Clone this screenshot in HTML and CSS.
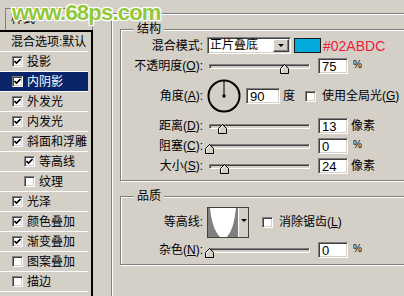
FILE: index.html
```html
<!DOCTYPE html>
<html lang="zh-CN">
<head>
<meta charset="utf-8">
<title>图层样式 - 内阴影</title>
<link rel="stylesheet" href="styles.css">
</head>
<body>
<div class="dialog">
  <aside class="side">
    <div class="side-head">样式</div>
    <ul class="list">
      <li class="item plain">混合选项:默认</li>
      <li class="item"><span class="cb"><svg viewBox="0 0 7 7" width="7" height="7"><path d="M0.5 3 L2.5 5 L6.5 1" fill="none" stroke="#000" stroke-width="1.6"/></svg></span><span class="txt">投影</span></li>
      <li class="item sel"><span class="cb"><svg viewBox="0 0 7 7" width="7" height="7"><path d="M0.5 3 L2.5 5 L6.5 1" fill="none" stroke="#000" stroke-width="1.6"/></svg></span><span class="txt">内阴影</span></li>
      <li class="item"><span class="cb"><svg viewBox="0 0 7 7" width="7" height="7"><path d="M0.5 3 L2.5 5 L6.5 1" fill="none" stroke="#000" stroke-width="1.6"/></svg></span><span class="txt">外发光</span></li>
      <li class="item"><span class="cb"><svg viewBox="0 0 7 7" width="7" height="7"><path d="M0.5 3 L2.5 5 L6.5 1" fill="none" stroke="#000" stroke-width="1.6"/></svg></span><span class="txt">内发光</span></li>
      <li class="item"><span class="cb"><svg viewBox="0 0 7 7" width="7" height="7"><path d="M0.5 3 L2.5 5 L6.5 1" fill="none" stroke="#000" stroke-width="1.6"/></svg></span><span class="txt">斜面和浮雕</span></li>
      <li class="item sub"><span class="cb"><svg viewBox="0 0 7 7" width="7" height="7"><path d="M0.5 3 L2.5 5 L6.5 1" fill="none" stroke="#000" stroke-width="1.6"/></svg></span><span class="txt">等高线</span></li>
      <li class="item sub"><span class="cb"></span><span class="txt">纹理</span></li>
      <li class="item"><span class="cb"><svg viewBox="0 0 7 7" width="7" height="7"><path d="M0.5 3 L2.5 5 L6.5 1" fill="none" stroke="#000" stroke-width="1.6"/></svg></span><span class="txt">光泽</span></li>
      <li class="item"><span class="cb"><svg viewBox="0 0 7 7" width="7" height="7"><path d="M0.5 3 L2.5 5 L6.5 1" fill="none" stroke="#000" stroke-width="1.6"/></svg></span><span class="txt">颜色叠加</span></li>
      <li class="item"><span class="cb"><svg viewBox="0 0 7 7" width="7" height="7"><path d="M0.5 3 L2.5 5 L6.5 1" fill="none" stroke="#000" stroke-width="1.6"/></svg></span><span class="txt">渐变叠加</span></li>
      <li class="item"><span class="cb"></span><span class="txt">图案叠加</span></li>
      <li class="item"><span class="cb"></span><span class="txt">描边</span></li>
    </ul>
  </aside>

  <main class="main">
    <div class="outer">
      <section class="group g-struct">
        <div class="legend">结构</div>

        <div class="row r1">
          <span class="lbl">混合模式:</span>
          <div class="ctrl">
            <div class="select"><span class="sel-text">正片叠底</span><span class="sel-btn"><i class="tri"></i></span></div>
            <span class="swatch"></span>
            <span class="hex">#02ABDC</span>
          </div>
        </div>

        <div class="row r2">
          <span class="lbl">不透明度(<u>O</u>):</span>
          <div class="ctrl">
            <div class="slider"><div class="track"></div><svg class="thumb" style="left:75%" viewBox="0 0 9 10" width="9" height="10"><polygon points="4.5,0.5 8.5,4.5 8.5,9.5 0.5,9.5 0.5,4.5" fill="#d4d0c8" stroke="#000"/><polyline points="1.5,8.5 1.5,5 4.5,2" fill="none" stroke="#fff"/></svg></div>
            <span class="num">75</span>
            <span class="pct">%</span>
          </div>
        </div>

        <div class="row r3">
          <span class="lbl">角度(<u>A</u>):</span>
          <div class="ctrl">
            <svg class="dial" viewBox="0 0 34 34" width="34" height="34"><circle cx="17" cy="17" r="15.5" fill="none" stroke="#000" stroke-width="2"/><line x1="17" y1="17" x2="17" y2="2" stroke="#000" stroke-width="1"/><rect x="15.5" y="15.5" width="3" height="3" fill="#000"/></svg>
            <span class="num wide">90</span>
            <span class="du">度</span>
            <span class="cb gap"></span>
            <span class="cb-text">使用全局光(<u>G</u>)</span>
          </div>
        </div>

        <div class="row r4">
          <span class="lbl">距离(<u>D</u>):</span>
          <div class="ctrl">
            <div class="slider"><div class="track"></div><svg class="thumb" style="left:13%" viewBox="0 0 9 10" width="9" height="10"><polygon points="4.5,0.5 8.5,4.5 8.5,9.5 0.5,9.5 0.5,4.5" fill="#d4d0c8" stroke="#000"/><polyline points="1.5,8.5 1.5,5 4.5,2" fill="none" stroke="#fff"/></svg></div>
            <span class="num">13</span>
            <span class="unit">像素</span>
          </div>
        </div>

        <div class="row r5">
          <span class="lbl">阻塞(<u>C</u>):</span>
          <div class="ctrl">
            <div class="slider"><div class="track"></div><svg class="thumb" style="left:0%" viewBox="0 0 9 10" width="9" height="10"><polygon points="4.5,0.5 8.5,4.5 8.5,9.5 0.5,9.5 0.5,4.5" fill="#d4d0c8" stroke="#000"/><polyline points="1.5,8.5 1.5,5 4.5,2" fill="none" stroke="#fff"/></svg></div>
            <span class="num">0</span>
            <span class="pct">%</span>
          </div>
        </div>

        <div class="row r6">
          <span class="lbl">大小(<u>S</u>):</span>
          <div class="ctrl">
            <div class="slider"><div class="track"></div><svg class="thumb" style="left:15%" viewBox="0 0 9 10" width="9" height="10"><polygon points="4.5,0.5 8.5,4.5 8.5,9.5 0.5,9.5 0.5,4.5" fill="#d4d0c8" stroke="#000"/><polyline points="1.5,8.5 1.5,5 4.5,2" fill="none" stroke="#fff"/></svg></div>
            <span class="num">24</span>
            <span class="unit">像素</span>
          </div>
        </div>
      </section>

      <section class="group g-quality">
        <div class="legend">品质</div>

        <div class="row q1">
          <span class="lbl">等高线:</span>
          <div class="ctrl">
            <div class="contour">
              <svg class="cont-img" viewBox="0 0 30 29" width="30" height="29"><rect width="30" height="29" fill="#7f7f7f"/><path d="M2 0 Q4 21 12 29 L19 29 Q26 21 28 0 Z" fill="#fff"/></svg>
              <span class="cont-btn"><i class="tri"></i></span>
            </div>
            <span class="cb gap2"></span>
            <span class="cb-text">消除锯齿(<u>L</u>)</span>
          </div>
        </div>

        <div class="row q2">
          <span class="lbl">杂色(<u>N</u>):</span>
          <div class="ctrl">
            <div class="slider"><div class="track"></div><svg class="thumb" style="left:0%" viewBox="0 0 9 10" width="9" height="10"><polygon points="4.5,0.5 8.5,4.5 8.5,9.5 0.5,9.5 0.5,4.5" fill="#d4d0c8" stroke="#000"/><polyline points="1.5,8.5 1.5,5 4.5,2" fill="none" stroke="#fff"/></svg></div>
            <span class="num">0</span>
            <span class="pct">%</span>
          </div>
        </div>
      </section>
    </div>
  </main>

  <div class="watermark">www.68ps.com</div>
</div>
</body>
</html>
```

FILE: styles.css
```css
html, body {
  margin: 0;
  padding: 0;
}

body {
  width: 404px;
  height: 296px;
  overflow: hidden;
  background: #d4d0c8;
  color: #000;
  font-family: "Liberation Sans", "Noto Sans CJK SC", sans-serif;
  font-size: 12px;
  line-height: 16px;
}

u {
  text-decoration: underline;
}

.dialog {
  position: relative;
  display: flex;
  width: 404px;
  height: 296px;
  overflow: hidden;
}

/* ---------- left list ---------- */
.side {
  flex: none;
  width: 93px;
  padding-top: 8px;
  box-sizing: border-box;
  display: flex;
  flex-direction: column;
}

.side-head {
  margin-left: 5px;
  height: 22px;
  box-sizing: border-box;
  border: 1px solid #808080;
  border-bottom: 0;
  padding-left: 5px;
  line-height: 20px;
}

.list {
  flex: 1;
  list-style: none;
  margin: 0;
  padding: 0 3px 0 0;
  border-top: 2px solid #000;
  border-right: 2px solid #000;
}

.item {
  height: 20px;
  box-sizing: border-box;
  border-bottom: 1px solid #fff;
  display: flex;
  align-items: center;
  padding-left: 12px;
  white-space: nowrap;
}

.item.plain {
  padding-left: 11px;
}

.item.sub {
  padding-left: 24px;
}

.item.sel {
  background: #0a246a;
  color: #fff;
}

.item .txt {
  margin-left: 4px;
}

/* ---------- checkbox ---------- */
.cb {
  flex: none;
  width: 11px;
  height: 11px;
  box-sizing: border-box;
  background: #fff;
  border: 1px solid;
  border-color: #808080 #fff #fff #808080;
  box-shadow: inset 1px 1px 0 #404040, inset -1px -1px 0 #d4d0c8;
  display: flex;
  align-items: center;
  justify-content: center;
}

.cb svg {
  display: block;
}

/* ---------- right side ---------- */
.main {
  flex: none;
  width: 400px;
  margin-left: 18px;
  padding-top: 13px;
}

.outer {
  width: 400px;
  min-height: 300px;
  box-sizing: border-box;
  border-top: 1px solid #808080;
  border-left: 1px solid #808080;
  box-shadow: inset 1px 1px 0 #fff;
  padding: 15px 0 0 8px;
}

.group {
  border: 1px solid #808080;
  box-shadow: inset 1px 1px 0 #fff, 1px 1px 0 #fff;
}

.g-struct {
  padding-bottom: 6px;
}

.g-quality {
  margin-top: 15px;
  padding-bottom: 6px;
}

.legend {
  width: max-content;
  height: 16px;
  margin: -9px 0 0 13px;
  padding: 0 3px;
  background: #d4d0c8;
  line-height: 16px;
}

.row {
  display: flex;
  align-items: center;
}

.r1 { height: 17px; }
.r2 { height: 17px; margin-top: 3px; }
.r3 { height: 34px; margin-top: 5px; }
.r4 { height: 17px; margin-top: 4px; }
.r5 { height: 17px; margin-top: 3px; }
.r6 { height: 17px; margin-top: 3px; }
.q1 { height: 32px; margin-top: 2px; }
.q2 { height: 17px; margin-top: 3px; }

.lbl {
  flex: none;
  width: 82px;
  text-align: right;
  white-space: nowrap;
  line-height: 16px;
}

.ctrl {
  display: flex;
  align-items: center;
  margin-left: 4px;
  white-space: nowrap;
}

/* select */
.select {
  flex: none;
  width: 84px;
  height: 17px;
  box-sizing: border-box;
  padding: 1px;
  background: #fff;
  border: 1px solid;
  border-color: #808080 #fff #fff #808080;
  box-shadow: inset 1px 1px 0 #404040, inset -1px -1px 0 #d4d0c8;
  display: flex;
  align-items: center;
}

.sel-text {
  padding-left: 1px;
  line-height: 13px;
}

.sel-btn {
  margin-left: auto;
  width: 16px;
  height: 13px;
  box-sizing: border-box;
  background: #d4d0c8;
  border: 1px solid;
  border-color: #fff #404040 #404040 #fff;
  box-shadow: inset -1px -1px 0 #808080;
  display: flex;
  align-items: center;
  justify-content: center;
}

.tri {
  display: block;
  width: 0;
  height: 0;
  border-left: 3px solid transparent;
  border-right: 3px solid transparent;
  border-top: 3px solid #000;
}

.swatch {
  flex: none;
  margin-left: 3px;
  width: 27px;
  height: 15px;
  box-sizing: border-box;
  border: 1px solid #1a1a1a;
  background: #02abdc;
}

.hex {
  margin-left: 2px;
  color: #ee1c3a;
  font-family: "Liberation Sans", sans-serif;
  font-size: 14px;
  line-height: 16px;
}

/* slider */
.slider {
  position: relative;
  flex: none;
  width: 101px;
  height: 17px;
  margin-left: 2px;
}

.track {
  margin-top: 7px;
  height: 5px;
  box-sizing: border-box;
  background: #d4d0c8;
  border: 1px solid;
  border-color: #808080 #fff #fff #808080;
  box-shadow: inset 1px 1px 0 #404040;
}

.thumb {
  position: absolute;
  top: 7px;
  margin-left: -4.5px;
  display: block;
}

/* number field */
.num {
  flex: none;
  margin-left: 8px;
  width: 30px;
  height: 16px;
  box-sizing: border-box;
  padding: 1px 2px 0 3px;
  background: #fff;
  border: 1px solid;
  border-color: #808080 #fff #fff #808080;
  box-shadow: inset 1px 1px 0 #404040, inset -1px -1px 0 #d4d0c8;
  font-family: "Liberation Sans", sans-serif;
  font-size: 13px;
  line-height: 13px;
}

.num.wide {
  margin-left: 5px;
  width: 34px;
}

.pct {
  margin-left: 5px;
  font-family: "Liberation Sans", sans-serif;
  font-size: 10px;
  line-height: 10px;
  margin-bottom: 2px;
}

.unit {
  margin-left: 3px;
}

.dial {
  display: block;
  flex: none;
}

.du {
  margin-left: 3px;
}

.cb.gap {
  margin-left: 10px;
}

.cb.gap2 {
  margin-left: 13px;
}

.cb-text {
  margin-left: 6px;
}

/* contour picker */
.contour {
  flex: none;
  width: 42px;
  height: 31px;
  box-sizing: border-box;
  border: 1px solid #404040;
  display: flex;
}

.cont-img {
  display: block;
  flex: none;
}

.cont-btn {
  flex: 1;
  background: #d4d0c8;
  border-left: 1px solid #fff;
  display: flex;
  justify-content: center;
  padding-top: 11px;
  box-sizing: border-box;
}

/* watermark overlay */
.watermark {
  position: absolute;
  left: 12px;
  top: 2px;
  font-family: "Liberation Sans", sans-serif;
  font-weight: bold;
  font-size: 22px;
  line-height: 22px;
  letter-spacing: -0.8px;
  color: #93c83a;
  white-space: nowrap;
  pointer-events: none;
  text-shadow:
    1px 0 0 #fff, -1px 0 0 #fff, 0 1px 0 #fff, 0 -1px 0 #fff,
    1px 1px 0 #fff, -1px -1px 0 #fff, 1px -1px 0 #fff, -1px 1px 0 #fff,
    0 0 3px #fff;
}
```
